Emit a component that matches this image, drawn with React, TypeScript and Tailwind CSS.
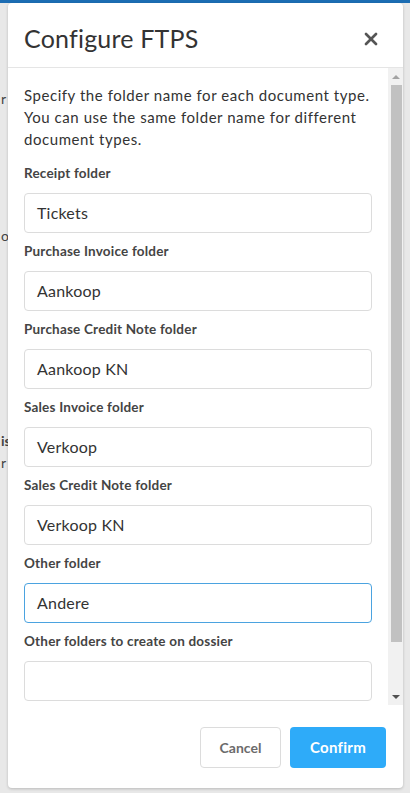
import { X } from "lucide-react"

const fields = [
  { label: "Receipt folder", value: "Tickets" },
  { label: "Purchase Invoice folder", value: "Aankoop" },
  { label: "Purchase Credit Note folder", value: "Aankoop KN" },
  { label: "Sales Invoice folder", value: "Verkoop" },
  { label: "Sales Credit Note folder", value: "Verkoop KN" },
  { label: "Other folder", value: "Andere", focused: true },
  { label: "Other folders to create on dossier", value: "" },
]

function Field({ label, value, focused }: { label: string; value: string; focused?: boolean }) {
  return (
    <div className="flex flex-col">
      <label className="h-[20px] text-[13.5px] font-bold leading-[20px] tracking-[0.2px] text-[#444]">{label}</label>
      <div
        className={
          focused
            ? "mt-[10px] flex h-[40px] items-center rounded-[4px] border border-[#4ba3e0] px-[12px] text-[16px] tracking-[0.2px] text-[#333]"
            : "mt-[10px] flex h-[40px] items-center rounded-[4px] border border-[#dcdcdc] px-[12px] text-[16px] tracking-[0.2px] text-[#333]"
        }
      >
        {value}
      </div>
    </div>
  )
}

export default function App() {
  return (
    <div className="relative h-[793px] w-[410px] overflow-hidden bg-[#e8e8e8] font-['Lato',sans-serif]">
      <div className="h-[3px] w-full bg-[#1c6db3]" />
      {/* page behind the dialog */}
      <div className="flex flex-col pl-[1px] text-[14px] text-[#444]">
        <span className="mt-[86px] leading-[20px]">r</span>
        <span className="mt-[117px] leading-[20px]">o</span>
        <span className="mt-[185px] font-bold leading-[20px]">is</span>
        <span className="mt-[2px] leading-[20px]">r</span>
      </div>

      <div className="absolute left-[8px] top-[3px] flex h-[785px] w-[395px] flex-col rounded-[4px] bg-white shadow-[0_1px_3px_rgba(0,0,0,0.2)]">
        <div className="flex h-[65px] shrink-0 items-center justify-between border-b border-[#e5e5e5] pl-[16px] pr-[22px] pt-[8px]">
          <h1 className="text-[25px] font-normal tracking-[0.2px] text-[#333]">Configure FTPS</h1>
          <X className="h-[20px] w-[20px] text-[#555]" strokeWidth={3.2} />
        </div>

        <div className="flex h-[637px] shrink-0 overflow-hidden">
          <div className="flex-1 overflow-hidden pl-[16px] pr-[16px] pt-[16px]">
            <p className="text-[15px] leading-[22px] tracking-[0.55px] text-[#333]">
              Specify the folder name for each document type. You can use the same folder name for different document
              types.
            </p>
            <div className="mt-[13px] flex flex-col gap-[8px]">
              {fields.map((f) => (
                <Field key={f.label} {...f} />
              ))}
            </div>
          </div>
          <div className="flex w-[15px] flex-col items-center bg-[#f1f1f1]">
            <div className="flex h-[17px] w-full items-center justify-center">
              <div className="h-0 w-0 border-x-[4px] border-b-[4px] border-x-transparent border-b-[#a3a3a3]" />
            </div>
            <div className="ml-[2px] h-[557px] w-[11px] bg-[#c1c1c1]" />
            <div className="flex-1" />
            <div className="flex h-[17px] w-full items-center justify-center">
              <div className="h-0 w-0 border-x-[4px] border-t-[4px] border-x-transparent border-t-[#505050]" />
            </div>
          </div>
        </div>

        <div className="flex flex-1 items-start justify-end gap-[9px] pr-[17px] pt-[22px]">
          <button className="h-[41px] w-[81px] rounded-[4px] border border-[#dcdcdc] bg-white text-[14px] font-bold text-[#6b6b6b]">
            Cancel
          </button>
          <button className="h-[41px] w-[96px] rounded-[4px] bg-[#2eabf9] text-[15px] font-bold tracking-[0.3px] text-white">
            Confirm
          </button>
        </div>
      </div>
    </div>
  )
}
